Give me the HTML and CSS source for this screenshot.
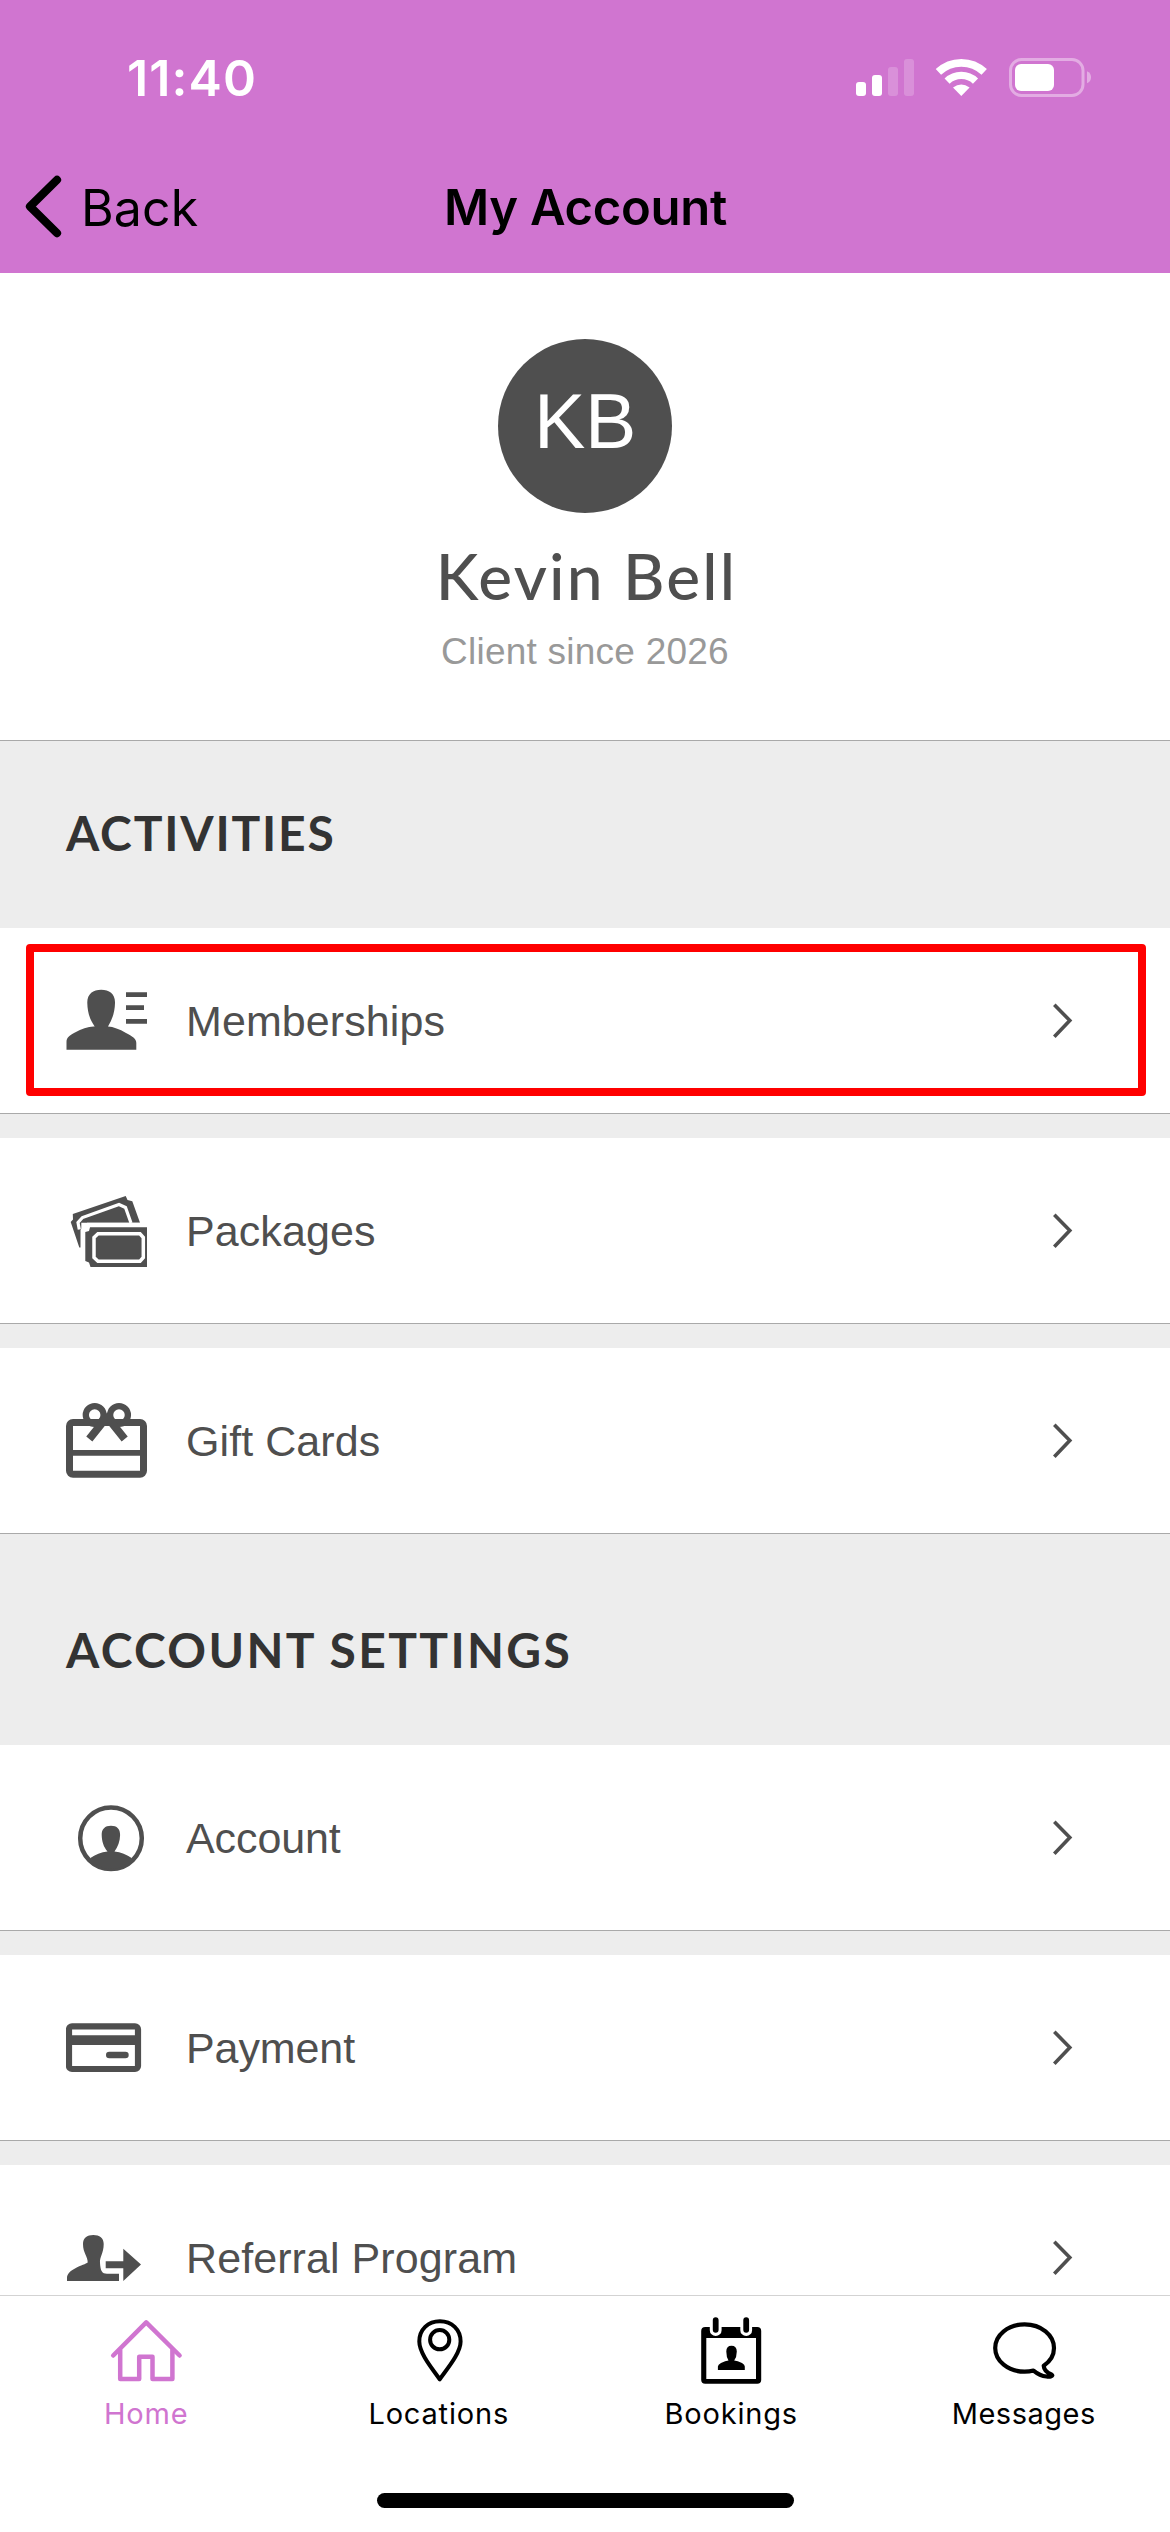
FILE: index.html
```html
<!DOCTYPE html>
<html lang="en">
<head>
<meta charset="utf-8">
<title>My Account</title>
<link rel="stylesheet" href="styles.css">
</head>
<body>
<svg class="defs" aria-hidden="true">
  <symbol id="chevron" viewBox="0 0 24 41"><path d="M4.3 4.7 19.8 20.5 4.3 36.7" fill="none" stroke="currentColor" stroke-width="3.6"/></symbol>
</svg>
<div class="screen">
  <header class="header">
    <div class="status">
      <time class="clock">11:40</time>
      <svg class="indicators" viewBox="0 0 250 60">
        <g fill="#fff">
          <rect x="6" y="34" width="10" height="14" rx="3"/>
          <rect x="22" y="27" width="10" height="21" rx="3"/>
          <rect x="38" y="19" width="10" height="29" rx="3" opacity=".2"/>
          <rect x="54" y="11" width="10" height="37" rx="3" opacity=".2"/>
          <path d="M111.3 48 103 39.5Q111.3 33.4 119.600 39.5Z"/>
          <rect x="165" y="16" width="39" height="27" rx="6"/>
          <path d="M237 23.300Q241 25 241 29.300T237 35.300Z" opacity=".4"/>
        </g>
        <g fill="none" stroke="#fff">
          <path d="M88.400 23.900A33.300 33.300 0 0 1 134.200 23.900" stroke-width="7.800"/>
          <path d="M97.100 33.100A20.600 20.600 0 0 1 125.500 33.100" stroke-width="7.400"/>
          <rect x="160.500" y="11.500" width="72.500" height="36" rx="11" stroke-width="3" opacity=".4"/>
        </g>
      </svg>
    </div>
    <nav class="nav">
      <a class="back">
        <svg class="back-icon" viewBox="0 0 79 132"><path d="M57 38.800 30 65.500 57 92.200" fill="none" stroke="#000" stroke-width="8.200" stroke-linecap="round" stroke-linejoin="round"/></svg>
        <span>Back</span>
      </a>
      <h1 class="title">My Account</h1>
    </nav>
  </header>

  <main class="content">
    <section class="profile">
      <div class="avatar">KB</div>
      <h2 class="name">Kevin Bell</h2>
      <p class="since">Client since 2026</p>
    </section>

    <h3 class="heading">ACTIVITIES</h3>
    <ul class="list">
      <li class="row highlighted">
        <svg class="icon" viewBox="0 0 82 101">
          <path d="M.5 79.700V72C.5 68 3 65.500 8 63Q20 56 28.700 56.500C23.500 49 21.500 42 21.300 33C21 24 27 19.700 35.200 19.700S49.400 24 49 33C48.800 42 46.500 49 42 56.500Q50 57 60 63C67 66.500 70.300 69 70.300 73V79.700Z"/>
          <path d="M60 22.300H81V27H60ZM60 35.300H78V40H60ZM60 49H81V53.700H60Z"/>
        </svg>
        <span class="label">Memberships</span>
        <svg class="chevron"><use href="#chevron"/></svg>
      </li>
      <li class="row">
        <svg class="icon" viewBox="0 0 82 101">
          <path d="M6.800 34 59.700 16 61.500 20 66.300 21.300 74 42.700H21L14.500 50V67.500H13.300L4.700 42 7 39.500Z"/>
          <path d="M13.300 49.500 12 42.500 16.500 37.500 53 24.500 59.500 27.500 65 43" fill="none" stroke="#fff" stroke-width="3.200"/>
          <path d="M15.300 42.700H82V90H15.300Z" fill="#fff"/>
          <path d="M24 47.300H81V87H24.500L23 82.500 19.300 81V52L23 51Z"/>
          <path d="M32 53.800H74L77.300 57.500V77.500L74 81.200H32L28 77.500V57.500Z" fill="none" stroke="#fff" stroke-width="3.500"/>
        </svg>
        <span class="label">Packages</span>
        <svg class="chevron"><use href="#chevron"/></svg>
      </li>
      <li class="row">
        <svg class="icon" viewBox="0 0 82 101">
          <g fill="none" stroke="currentColor">
            <circle cx="28.700" cy="25" r="8.900" stroke-width="6.300"/>
            <circle cx="53" cy="25" r="8.900" stroke-width="6.300"/>
            <rect x="3.500" y="32.500" width="74" height="51.700" rx="3.500" stroke-width="7"/>
            <path d="M3.500 62.900H77.500" stroke-width="5.600"/>
            <path d="M23.300 49 42.500 25M58.700 49 39.500 25" stroke-width="7.800"/>
          </g>
        </svg>
        <span class="label">Gift Cards</span>
        <svg class="chevron"><use href="#chevron"/></svg>
      </li>
    </ul>

    <h3 class="heading heading-tall">ACCOUNT SETTINGS</h3>
    <ul class="list">
      <li class="row">
        <svg class="icon" viewBox="0 0 82 101">
          <circle cx="45" cy="51.300" r="30.800" fill="none" stroke="currentColor" stroke-width="4.500"/>
          <path d="M24 71.300Q32 65.500 41.500 64.500C37.500 60 35.800 54 35.700 48C35.500 42 39 38.700 45 38.700S54.300 42 54.100 48C54 54 52 60 48.500 64.500Q58 65.500 66 71.300Q58 82 45 82T24 71.300Z"/>
        </svg>
        <span class="label label-snug">Account</span>
        <svg class="chevron"><use href="#chevron"/></svg>
      </li>
      <li class="row">
        <svg class="icon" viewBox="0 0 82 101">
          <rect x="3" y="29.300" width="69" height="42.700" rx="3" fill="none" stroke="currentColor" stroke-width="6.200"/>
          <path d="M3 38.300H72V48H3Z"/>
          <rect x="40" y="54.700" width="22.700" height="6.600" rx="3.300"/>
        </svg>
        <span class="label label-snug">Payment</span>
        <svg class="chevron"><use href="#chevron"/></svg>
      </li>
      <li class="row">
        <svg class="icon" viewBox="0 0 82 101">
          <path d="M1 74V71C1 67 4 64 9 61.500C15 58 20 57 21.700 55.500C22 50 17 46 17 37C17 31 21 28 27.300 28S37.700 31 37.700 37C37.700 46 33.500 50 34 56C34.500 64 36 66.700 41 66.700H53V74Z"/>
          <path d="M39.700 54.300H57.300V41.700L75 57.500 57.300 74V61.300H39.700Z"/>
        </svg>
        <span class="label">Referral Program</span>
        <svg class="chevron"><use href="#chevron"/></svg>
      </li>
    </ul>
  </main>

  <footer class="footer">
    <nav class="tabs">
      <a class="tab active">
        <svg class="tab-icon" viewBox="0 0 80 70">
          <g fill="none" stroke="currentColor" stroke-linecap="round" stroke-linejoin="round" stroke-width="4.500">
            <path d="M7.200 39.500 40.200 6.300 73.600 39.500"/>
            <path d="M14.200 34V63H33.200V40.800H46.500V63H66.400V34"/>
          </g>
        </svg>
        <span>Home</span>
      </a>
      <a class="tab">
        <svg class="tab-icon" viewBox="0 0 80 70">
          <g fill="none" stroke="currentColor" stroke-width="4" stroke-linejoin="round">
            <path d="M40.700 63.300C34 53.500 20.300 37.500 20.300 25.500C20.300 13.500 29 5.300 40.900 5.300S61.600 13.500 61.600 25.500C61.600 37.500 47.500 53.500 40.700 63.300Z"/>
            <circle cx="40.700" cy="23.700" r="9.600"/>
          </g>
        </svg>
        <span>Locations</span>
      </a>
      <a class="tab">
        <svg class="tab-icon" viewBox="0 0 80 70">
          <path d="M14.200 11H66.200Q70.200 11 70.200 15V64Q70.200 67.700 66.200 67.700H14.200Q10.200 67.700 10.200 64V15Q10.200 11 14.200 11ZM15.300 22V63H65V22Z" fill="currentColor" fill-rule="evenodd"/>
          <g fill="none" stroke-linecap="round">
            <path d="M24.700 8V14.200M55.200 8V14.200" stroke="#fff" stroke-width="11.800"/>
            <path d="M24.700 4.200V13.800M55.200 4.200V13.800" stroke="currentColor" stroke-width="5.800"/>
          </g>
          <path d="M26.900 54V50.500Q26.900 48.500 30 47Q34.500 44.800 37.500 44.500Q35.300 41 35.300 35.500Q35.300 29.700 40.500 29.700T45.800 35.500Q45.800 41 43.200 44.500Q46.500 44.800 51 47Q53.800 48.500 53.800 50.500V54Z" fill="currentColor"/>
        </svg>
        <span>Bookings</span>
      </a>
      <a class="tab tab-snug">
        <svg class="tab-icon" viewBox="0 0 80 70">
          <path d="M49.500 54.600Q45.500 55.700 40.600 55.700C24 55.700 11.200 45 11.200 32S24 8.300 40.600 8.300S70 19 70 32C70 39 66 45.500 59.700 49.700C60 55 63.500 57 67.500 58.500C70 60 66 61 62.500 60.500C57 60 53 57.500 49.500 54.600Z" fill="none" stroke="currentColor" stroke-width="4.200" stroke-linejoin="round"/>
        </svg>
        <span>Messages</span>
      </a>
    </nav>
    <div class="home-indicator"></div>
  </footer>
</div>
</body>
</html>
```
FILE: styles.css
```css
* {
  box-sizing: border-box;
  margin: 0;
  padding: 0;
}

body {
  background: #fff;
  color: #4f4f4f;
}

.defs {
  display: none;
}

.screen {
  display: flex;
  flex-direction: column;
  width: 1170px;
  height: 2532px;
  overflow: hidden;
}

/* Header */
.header {
  flex: none;
  height: 273px;
  background: #d075d0;
  font-family: Inter, "Liberation Sans", sans-serif;
}

.status {
  display: flex;
  justify-content: space-between;
  height: 141px;
  padding: 48px 70px 33px 127px;
}

.clock {
  color: #fff;
  font-size: 50px;
  font-weight: 600;
  line-height: 60px;
  letter-spacing: 1.1px;
}

.indicators {
  width: 250px;
  height: 60px;
}

.nav {
  display: grid;
  grid-template-columns: 1fr auto 1fr;
  align-items: center;
  height: 132px;
  color: #000;
}

.back {
  display: flex;
  align-items: center;
  font-size: 50px;
  line-height: 60px;
  letter-spacing: 0.1px;
}

.back span {
  padding: 1px 0 0 2px;
}

.back-icon {
  width: 79px;
  height: 132px;
}

.title {
  padding: 1px 0 0 1px;
  font-size: 49px;
  font-weight: 600;
  line-height: 60px;
  letter-spacing: -0.3px;
}

/* Content */
.content {
  flex: none;
  height: 2022px;
  overflow: hidden;
  background: #ededed;
}

.profile {
  display: flex;
  flex-direction: column;
  align-items: center;
  height: 468px;
  padding-top: 66px;
  background: #fff;
  border-bottom: 1px solid #a9a9a9;
}

.avatar {
  display: flex;
  align-items: center;
  justify-content: center;
  width: 174px;
  height: 174px;
  padding-bottom: 9px;
  border-radius: 50%;
  background: #4f4f4f;
  color: #fff;
  font: 77px "Liberation Sans", sans-serif;
  letter-spacing: -0.4px;
}

.name {
  margin-top: 23px;
  padding-left: 3px;
  font: 500 64px/80px Lato, sans-serif;
  letter-spacing: 2.15px;
}

.since {
  margin-top: 11px;
  color: #999;
  font: 37px/50px "Liberation Sans", sans-serif;
  letter-spacing: 0.23px;
}

.heading {
  display: flex;
  align-items: center;
  height: 187px;
  padding: 0 66px 4px;
  color: #333;
  font: 700 48px/58px Lato, sans-serif;
  letter-spacing: 1.8px;
}

.heading-tall {
  height: 211px;
  padding: 20px 66px 0;
  letter-spacing: 2.35px;
}

.list {
  display: flex;
  flex-direction: column;
  gap: 24px;
  list-style: none;
}

.row {
  position: relative;
  display: flex;
  align-items: center;
  height: 186px;
  padding: 0 96px 0 66px;
  background: #fff;
  border-bottom: 1px solid #a9a9a9;
}

/* Outline drawn over the row */
.highlighted::after {
  content: "";
  position: absolute;
  inset: 16px 24px 17px 26px;
  border: 8px solid #f00;
  border-radius: 4px;
}

.icon {
  flex: none;
  width: 82px;
  height: 101px;
  margin-right: 38px;
  fill: currentColor;
}

.label {
  flex: 1;
  font: 43px/60px "Liberation Sans", sans-serif;
  letter-spacing: 0.08px;
}

.label-snug {
  letter-spacing: -0.1px;
}

.chevron {
  width: 24px;
  height: 41px;
}

/* Footer */
.footer {
  flex: none;
  height: 237px;
  border-top: 1px solid #d3d3d3;
  background: #fff;
}

.tabs {
  display: grid;
  grid-template-columns: repeat(4, 1fr);
  height: 197px;
  padding-top: 20px;
}

.tab {
  display: flex;
  flex-direction: column;
  align-items: center;
  gap: 10px;
  color: #000;
  font: 29px/36px Inter, "Liberation Sans", sans-serif;
  letter-spacing: 0.82px;
}

.tab-snug {
  letter-spacing: 0.5px;
}

.active {
  color: #d075d0;
}

.tab-icon {
  width: 80px;
  height: 70px;
}

.home-indicator {
  width: 417px;
  height: 15px;
  margin: 0 auto;
  border-radius: 8px;
  background: #000;
}
```
